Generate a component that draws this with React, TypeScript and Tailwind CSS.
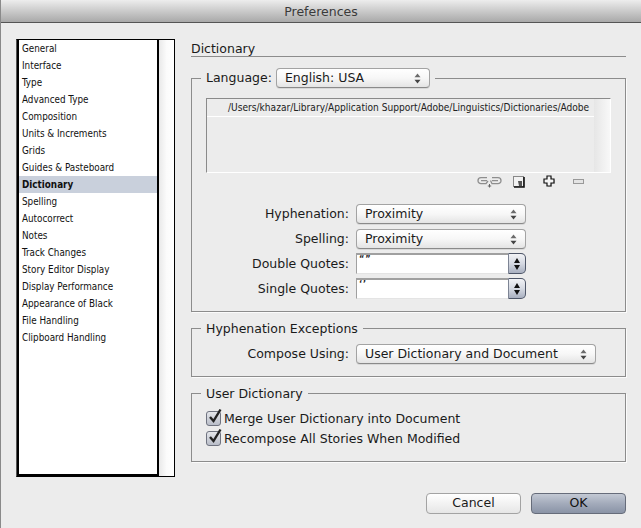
const items = ["General","Interface","Type","Advanced Type","Composition","Units & Increments","Grids","Guides & Pasteboard","Dictionary","Spelling","Autocorrect","Notes","Track Changes","Story Editor Display","Display Performance","Appearance of Black","File Handling","Clipboard Handling"];

const condensed = { fontFamily: '"DejaVu Sans Condensed", "DejaVu Sans", sans-serif' };

function Updown() {
  return (
    <svg width="7" height="11" viewBox="0 0 7 11" className="shrink-0">
      <path d="M3.5 0.5 L6.5 4.2 L0.5 4.2 Z" fill="#6a6a6a" />
      <path d="M3.5 10.5 L6.5 6.8 L0.5 6.8 Z" fill="#444" />
    </svg>
  );
}

function Select({ label, w }: { label: string; w: string }) {
  return (
    <div className={`${w} pl-[8px] h-[20px] flex items-center justify-between pr-[8px] rounded-[4px] border border-[#a3a3a3] border-b-[#8a8a8a] bg-gradient-to-b from-[#ffffff] via-[#f7f7f7] to-[#e4e4e4] text-[12.5px] text-[#1a1a1a] shadow-[0_1px_0_#d8d8d8]`}>
      <span className="pt-[1px]">{label}</span>
      <Updown />
    </div>
  );
}

function Row({ label, children, mt }: { label: string; children: React.ReactNode; mt: string }) {
  return (
    <div className={`flex items-center ${mt}`}>
      <div className="w-[157px] pt-[1px] text-right text-[12.5px] text-[#1a1a1a]">{label}</div>
      <div className="ml-[7px]">{children}</div>
    </div>
  );
}

function Quote({ value }: { value: string }) {
  return (
    <div className="flex w-[170px] h-[21px]">
      <div className="flex-1 bg-white border-t-2 border-l border-[#a0a0a0] border-b border-b-[#e4e4e4] pl-[2px] text-[9px] leading-[9px] tracking-[1px] font-bold text-[#222]" style={condensed}>{value}</div>
      <div className="w-[18px] flex flex-col items-center justify-center gap-[2px] rounded-r-[5px] border border-[#4e5668] border-l-[#7d8494] bg-gradient-to-b from-[#f2f3f6] via-[#d5d9e2] to-[#a9b0c0]">
        <svg width="6" height="5" viewBox="0 0 6 5"><path d="M3 0 L6 5 L0 5 Z" fill="#111" /></svg>
        <svg width="6" height="5" viewBox="0 0 6 5"><path d="M3 5 L6 0 L0 0 Z" fill="#111" /></svg>
      </div>
    </div>
  );
}

function Check({ label, mt }: { label: string; mt: string }) {
  return (
    <div className={`flex items-center ${mt} ml-[14px] h-[17px]`}>
      <div className="relative w-[15px] h-[15px] rounded-[3px] border border-[#6f7380] bg-gradient-to-b from-[#e4e6ea] to-[#b9bdc8]">
        <svg width="17" height="18" viewBox="0 0 17 18" className="absolute left-[0px] top-[-5px]">
          <path d="M3 10 L6.5 14 L13.5 2.5" fill="none" stroke="#222" strokeWidth="2.4" />
        </svg>
      </div>
      <span className="ml-[3px] pt-[1px] text-[12.5px] text-[#1a1a1a]">{label}</span>
    </div>
  );
}

export default function App() {
  return (
    <div className="w-[641px] h-[528px] overflow-hidden bg-[#ececec] border-l border-[#8a8a8a]" style={{ fontFamily: '"DejaVu Sans", sans-serif' }}>
      <div className="h-[23px] pt-[2px] flex items-center justify-center bg-gradient-to-b from-[#ededed] to-[#a9a9a9] border-b border-[#555] text-[12.5px] text-[#3a3a3a]">
        Preferences
      </div>
      <div className="flex pl-[15px] pt-[16px]">
        <div className="flex w-[159px] h-[438px] border border-black border-l-[#555] bg-white">
          <div className="w-[142px] border-l-2 border-r-2 border-t-[1px] border-b-2 border-black bg-white -mt-[1px]" style={condensed}>
            {items.map((t) => (
              <div key={t} className={`h-[17px] pl-[3px] pt-[2px] flex items-center text-[9.8px] text-[#111] ${t === "Dictionary" ? "bg-[#c9d0dc] font-semibold" : ""}`}>{t}</div>
            ))}
          </div>
          <div className="flex-1 bg-gradient-to-r from-[#e9e9e9] via-[#fbfbfb] to-[#ffffff]" />
        </div>

        <div className="ml-[16px] w-[435px]">
          <div className="h-[18px] pt-[1px] border-b border-[#8c8c8c] text-[12.5px] leading-[17px] text-[#1a1a1a]">Dictionary</div>

          <fieldset className="mt-[11px] h-[244px] border border-[#8c8c8c] shadow-[1px_1px_0_#fbfbfb]">
            <legend className="ml-[9px] px-[5px] flex items-center">
              <span className="pt-[1px] text-[12.5px] text-[#1a1a1a]">Language:</span>
              <div className="ml-[4px]"><Select label="English: USA" w="w-[154px]" /></div>
            </legend>
            <div className="ml-[14px] mt-[10px] w-[405px] h-[75px] flex border-t border-l border-[#8a8a8a] border-r border-r-white border-b border-b-white">
              <div className="flex-1">
                <div className="h-[18px] pl-[21px] border-b border-white flex items-center text-[10.1px] text-[#222] whitespace-nowrap" style={condensed}>
                  /Users/khazar/Library/Application Support/Adobe/Linguistics/Dictionaries/Adobe
                </div>
              </div>
              <div className="w-[16px] bg-gradient-to-r from-[#e6e6e6] to-[#f8f8f8]" />
            </div>
            <div className="flex items-center h-[15px] mt-[1px] pl-[285px]">
              <svg width="25" height="13" viewBox="0 0 25 13">
                <g fill="none" stroke="#8e8e8e" strokeWidth="1.3">
                  <path d="M10 2.7 H4 A3 3 0 0 0 4 8.7 H9 L11 6" />
                  <path d="M15 2.7 H21 A3 3 0 0 1 21 8.7 H15 L13.5 5.5" />
                  <path d="M4 5.7 H10 M15 5.7 H21" />
                  <path d="M12.5 9 V12.5 M10.8 11 H14.2" stroke="#666" strokeWidth="1" />
                </g>
              </svg>
              <svg width="12" height="12" viewBox="0 0 12 12" className="ml-[11px]">
                <rect x="0.5" y="0.5" width="10" height="10" fill="#f2f2f2" stroke="#888" />
                <path d="M1 11 H11 V1" fill="none" stroke="#111" strokeWidth="1.6" />
                <path d="M5 5 H9 V10 H6 Z" fill="#555" />
              </svg>
              <svg width="13" height="13" viewBox="0 0 13 13" className="ml-[18px]">
                <path d="M5 2 H9 V5 H12 V9 H9 V12 H5 V9 H2 V5 H5 Z" fill="#bbb" opacity="0.6" />
                <path d="M4 1 H8 V4 H11 V8 H8 V11 H4 V8 H1 V4 H4 Z" fill="#f4f4f4" stroke="#111" strokeWidth="1.2" />
              </svg>
              <svg width="11" height="7" viewBox="0 0 11 7" className="ml-[17px]">
                <rect x="0.5" y="1.5" width="10" height="4" fill="#e4e4e4" stroke="#999" />
              </svg>
            </div>
            <Row label="Hyphenation:" mt="mt-[15px]"><Select label="Proximity" w="w-[170px]" /></Row>
            <Row label="Spelling:" mt="mt-[5px]"><Select label="Proximity" w="w-[170px]" /></Row>
            <Row label="Double Quotes:" mt="mt-[4px]"><Quote value="“”" /></Row>
            <Row label="Single Quotes:" mt="mt-[4px]"><Quote value="‘’" /></Row>
          </fieldset>

          <fieldset className="mt-[8px] h-[57px] border border-[#8c8c8c] shadow-[1px_1px_0_#fbfbfb]">
            <legend className="ml-[9px] px-[5px] h-[16px] pt-[1px] leading-[16px] text-[12.5px] text-[#1a1a1a]">Hyphenation Exceptions</legend>
            <Row label="Compose Using:" mt="mt-[8px]"><Select label="User Dictionary and Document" w="w-[240px]" /></Row>
          </fieldset>

          <fieldset className="mt-[8px] h-[77px] border border-[#8c8c8c] shadow-[1px_1px_0_#fbfbfb]">
            <legend className="ml-[9px] px-[5px] h-[16px] pt-[1px] leading-[16px] text-[12.5px] text-[#1a1a1a]">User Dictionary</legend>
            <Check label="Merge User Dictionary into Document" mt="mt-[9px]" />
            <Check label="Recompose All Stories When Modified" mt="mt-[3px]" />
          </fieldset>

          <div className="mt-[31px] flex justify-end gap-[10px] w-[435px]">
            <div className="w-[95px] h-[21px] rounded-[4px] border border-[#a3a3a3] bg-gradient-to-b from-[#ffffff] to-[#e6e6e6] flex items-center justify-center text-[12.5px] text-[#1a1a1a]">Cancel</div>
            <div className="w-[95px] h-[21px] rounded-[4px] border border-[#666c7a] bg-gradient-to-b from-[#c3c9d4] via-[#a3abbb] to-[#8a93a6] flex items-center justify-center text-[12.5px] text-[#111]">OK</div>
          </div>
        </div>
      </div>
    </div>
  );
}
